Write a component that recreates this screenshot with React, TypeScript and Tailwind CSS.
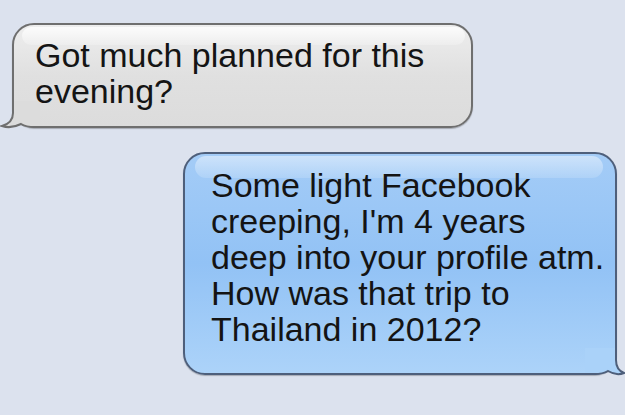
export default function App() {
  return (
    <div
      className="w-[625px] h-[415px] overflow-hidden bg-[#dce2ee] flex flex-col pt-[23px] pl-[12px] pr-[8px]"
      style={{ fontFamily: '"Liberation Sans", Arial, Helvetica, sans-serif' }}
    >
      {/* incoming */}
      <div className="relative self-start w-[461px] h-[105px] rounded-[22px] border-2 border-[#6f6f6f] bg-linear-to-b from-[#eeeeee] via-[#e0e0e0] to-[#dcdcdc] shadow-[0_1px_1px_rgba(0,0,0,0.25)] pl-[21px] pt-[12px]">
        <div className="absolute top-[2px] left-[8px] right-[6px] h-[18px] rounded-full bg-linear-to-b from-white/80 to-white/20" />
        <svg
          className="absolute left-[-14px] top-[70px]"
          width="40"
          height="36"
          viewBox="0 0 40 36"
        >
          <path
            d="M13,6 L13,18 C13,25 9,29 2,31 C8,33 15,32 21,29 C25,31.5 29,32 35,32 L40,32 L40,6 Z"
            fill="#dcdcdc"
          />
          <path
            d="M13,0 L13,18 C13,25 9,29 2,31 C8,33 15,32 21,29 C25,31.5 29,32 35,32 L40,32"
            fill="none"
            stroke="#6f6f6f"
            strokeWidth="2"
          />
        </svg>
        <p className="relative z-10 text-[34px] leading-[36px] text-[#141414] whitespace-nowrap">
          Got much planned for this
          <br />
          evening?
        </p>
      </div>

      {/* outgoing */}
      <div className="relative self-end mr-[0px] mt-[24px] w-[434px] h-[223px] rounded-[22px] border-2 border-[#4e5f7b] bg-linear-to-b from-[#a4ccf7] via-[#92c2f5] to-[#acd3f9] shadow-[0_1px_1px_rgba(0,0,0,0.25)] pl-[26px] pt-[13px]">
        <div className="absolute top-[2px] left-[10px] right-[12px] h-[22px] rounded-full bg-linear-to-b from-white/45 to-white/15" />
        <svg
          className="absolute left-[400px] top-[188px]"
          width="40"
          height="36"
          viewBox="0 0 40 36"
        >
          <path
            d="M31,6 L31,18 C31,25 34,29 39,31 C34,33 28,32 23,29 C19,31.5 15,32 9,32 L0,32 L0,6 Z"
            fill="#aad2f9"
          />
          <path
            d="M31,0 L31,18 C31,25 34,29 39,31 C34,33 28,32 23,29 C19,31.5 15,32 9,32 L0,32"
            fill="none"
            stroke="#4e5f7b"
            strokeWidth="2"
          />
        </svg>
        <p className="relative z-10 text-[34px] leading-[36px] text-[#141414] whitespace-nowrap">
          Some light Facebook
          <br />
          creeping, I'm 4 years
          <br />
          deep into your profile atm.
          <br />
          How was that trip to
          <br />
          Thailand in 2012?
        </p>
      </div>
    </div>
  );
}
